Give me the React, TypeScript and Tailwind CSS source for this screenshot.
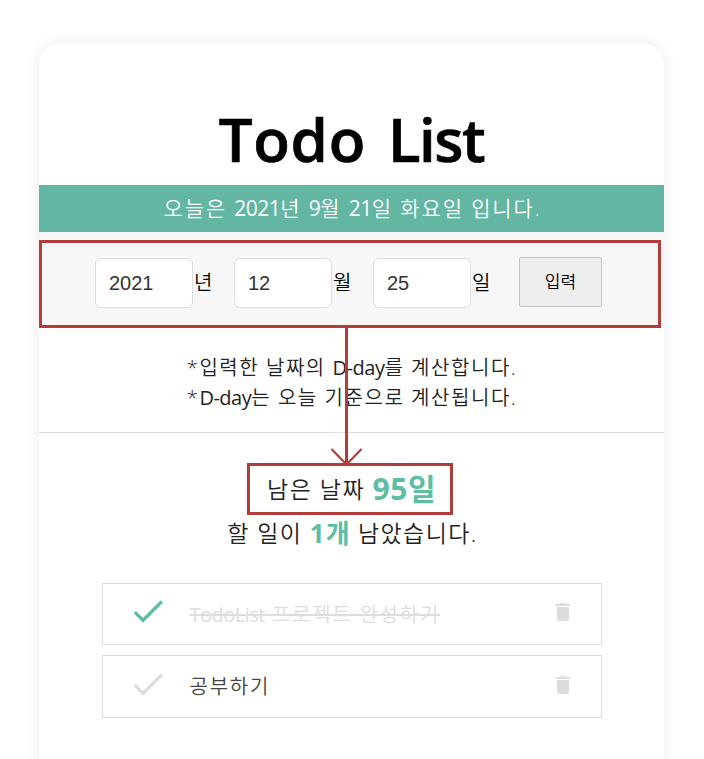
import { MdDelete, MdDone } from 'react-icons/md';

// Latin letters and digits are set heavier and tighter than the Hangul around them.
function Mixed({ text }: { text: string }) {
  return (
    <span className="whitespace-pre">
      {text.split(/([A-Za-z0-9-]+)/).map((part, i) =>
        i % 2 === 1 ? (
          <span key={i} className="font-medium tracking-[-0.5px]">
            {part}
          </span>
        ) : (
          part
        ),
      )}
    </span>
  );
}

function DateField({ value, unit, className }: { value: string; unit: string; className: string }) {
  return (
    <label className={`flex items-center ${className}`}>
      <input
        defaultValue={value}
        className="h-[50px] w-[98px] rounded-md border border-[#dddddd] bg-white pl-[13px] font-['Liberation_Sans','Noto_Sans_CJK_KR',sans-serif] text-xl text-[#333] outline-none"
      />
      <span className="ml-px text-xl leading-7">{unit}</span>
    </label>
  );
}

function TodoItem({ done, text }: { done?: boolean; text: string }) {
  return (
    <li
      className={`flex items-center border border-[#dddddd] pl-[25px] pr-[26px] ${done ? 'h-[62px]' : 'h-[63px]'}`}
    >
      <MdDone className={`mb-[6px] size-10 shrink-0 ${done ? 'text-[#5dbea3]' : 'text-[#dddddd]'}`} />
      <span
        className={`ml-[22px] flex-1 pt-px text-xl tracking-[1.75px] ${done ? 'text-[#dddddd] line-through decoration-2' : 'text-[#444]'}`}
      >
        <Mixed text={text} />
      </span>
      <MdDelete className="mb-[4px] size-6 shrink-0 text-[#dddddd]" />
    </li>
  );
}

export default function App() {
  return (
    <div className="relative h-[759px] overflow-hidden bg-white pl-[39px] pt-[43px] font-['Open_Sans','Noto_Sans_CJK_KR',sans-serif] font-[350] text-black">
      <main className="h-[900px] w-[625px] rounded-[22px] bg-white shadow-[0_0_14px_rgba(0,0,0,0.09)]">
        <h1 className="flex h-[142px] items-center justify-center pt-[50px] text-[60px] font-semibold leading-none [-webkit-text-stroke:0.7px_black]">
          <span className="tracking-[0.7px]">Todo</span>
          <span className="ml-[22px] tracking-[-1.5px]">List</span>
        </h1>
        <p className="flex h-[47px] items-center justify-center bg-[#62b6a2] pl-0.5 text-[21px] tracking-[1.85px] text-white">
          <Mixed text="오늘은 2021년 9월 21일 화요일 입니다." />
        </p>
        <form className="flex h-[96px] items-center bg-[#f7f7f7] pl-[56px] pt-[6px]">
          <DateField value="2021" unit="년" className="w-[139px]" />
          <DateField value="12" unit="월" className="w-[139px]" />
          <DateField value="25" unit="일" className="w-[146px]" />
          <button
            type="button"
            className="mb-0.5 h-[50px] w-[83px] rounded-[2px] border border-[#c4c4c4] bg-[#eeeeee] text-[17px] text-black"
          >
            입력
          </button>
        </form>
        <div className="flex h-[105px] flex-col items-center border-b border-[#dddddd] pl-px pt-[25px] text-xl leading-[30px] tracking-[1.55px] text-[#222]">
          <p>
            <Mixed text="*입력한 날짜의 D-day를 계산합니다." />
          </p>
          <p>
            <Mixed text="*D-day는 오늘 기준으로 계산됩니다." />
          </p>
        </div>
        <div className="flex flex-col items-center pt-[30px] text-[#222]">
          <p className="flex h-[52px] items-center text-[23px] tracking-[1.5px]">
            남은 날짜&nbsp;
            <strong className="pb-0.5 text-[30px] font-bold tracking-[0.5px] text-[#5dbea3]">95일</strong>
          </p>
          <p className="flex h-[36px] items-center pl-0.5 text-[23px] tracking-[1.4px]">
            할 일이&nbsp;<strong className="text-[26px] font-bold tracking-[1px] text-[#5dbea3]">1개</strong>
            &nbsp;남았습니다.
          </p>
        </div>
        <ul className="mx-auto mt-[32px] flex w-[500px] flex-col gap-2.5">
          <TodoItem done text="TodoList 프로젝트 완성하기" />
          <TodoItem text="공부하기" />
        </ul>
      </main>
      <div className="absolute left-[39px] top-[240px] h-[88px] w-[622px] border-[3px] border-[#b43d3b]" />
      <svg className="absolute left-[330px] top-[327px]" width="34" height="140" fill="none" stroke="#b43d3b">
        <path d="M16.5 0V137" strokeWidth="3" />
        <path d="M1.5 122L16.5 137.500L31.500 122" strokeWidth="2.2" />
      </svg>
      <div className="absolute left-[247px] top-[463px] h-[52px] w-[206px] border-[3px] border-[#b43d3b]" />
    </div>
  );
}
